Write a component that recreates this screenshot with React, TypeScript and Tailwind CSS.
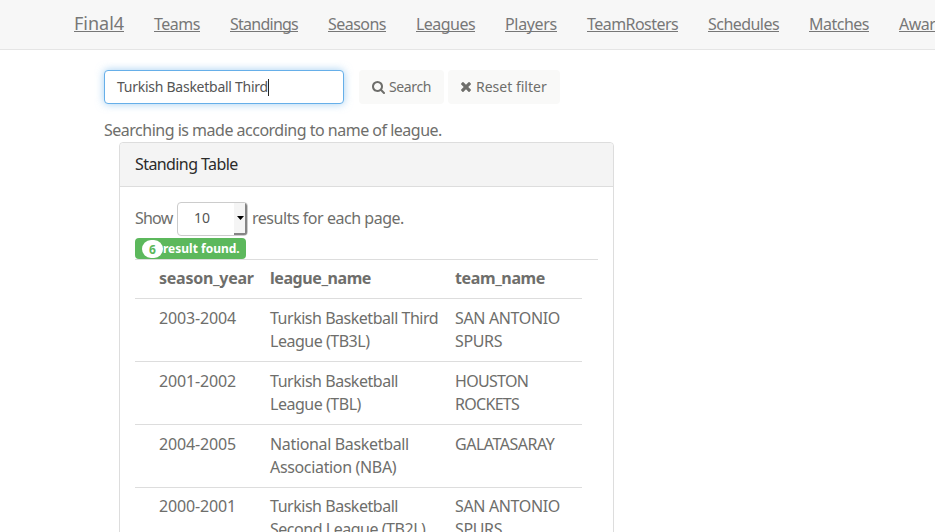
import React from "react";

const links = [
  { label: "Teams", style: "w-[46px] tracking-[-0.48px]" },
  { label: "Standings", style: "w-[68px] tracking-[-0.75px]" },
  { label: "Seasons", style: "w-[58px] tracking-[-0.53px]" },
  { label: "Leagues", style: "w-[59px] tracking-[-0.54px]" },
  { label: "Players", style: "w-[52px] tracking-[-0.33px]" },
  { label: "TeamRosters", style: "w-[91px] tracking-[-0.55px]" },
  { label: "Schedules", style: "w-[71px] tracking-[-0.54px]" },
  { label: "Matches", style: "w-[60px] tracking-[-0.5px]" },
  { label: "Awards", style: "w-[53px] tracking-[-0.5px]" },
];

const rows = [
  { season: "2003-2004", league: ["Turkish Basketball Third", "League (TB3L)"], team: ["SAN ANTONIO", "SPURS"], leagueStyle: "tracking-[-0.48px]", teamStyle: "tracking-[-0.36px]" },
  { season: "2001-2002", league: ["Turkish Basketball", "League (TBL)"], team: ["HOUSTON", "ROCKETS"], leagueStyle: "tracking-[-0.47px]", teamStyle: "tracking-[-0.7px]" },
  { season: "2004-2005", league: ["National Basketball", "Association (NBA)"], team: ["GALATASARAY"], leagueStyle: "tracking-[-0.34px]", teamStyle: "tracking-[-0.48px]" },
  { season: "2000-2001", league: ["Turkish Basketball", "Second League (TB2L)"], team: ["SAN ANTONIO", "SPURS"], leagueStyle: "tracking-[-0.47px]", teamStyle: "tracking-[-0.36px]" },
];

function Navbar() {
  return (
    <nav className="flex h-[50px] items-start gap-[30px] overflow-hidden border-b border-[#e5e5e5] bg-[#f7f7f7] pl-[74px] text-[#777]">
      <a className="mt-[12px] h-[20px] w-[50px] shrink-0 border-b border-[#777] text-[18px] leading-[23px]">Final4</a>
      {links.map((l) => (
        <a key={l.label} className={`mt-[12px] h-[20px] shrink-0 whitespace-nowrap border-b border-[#777] leading-[24px] ${l.style}`}>
          {l.label}
        </a>
      ))}
    </nav>
  );
}

function SearchForm() {
  return (
    <form className="mt-[20px] flex h-[34px] text-[14px]">
      <div className="flex w-[240px] items-center rounded border border-[#66afe9] bg-white pb-[2px] pl-[12px] tracking-[-0.26px] text-[#555] shadow-[0_0_8px_rgba(102,175,233,0.6)]">
        Turkish Basketball Third
        <span className="mt-[2px] h-[17px] w-px bg-[#222]" />
      </div>
      <button type="button" className="ml-[15px] flex w-[85px] items-center gap-[4px] rounded bg-[#f9f9f8] pl-[13px] tracking-[-0.38px] text-[#6e6e6b]">
        <svg viewBox="0 0 1664 1664" className="size-[13px]" fill="currentColor">
          <path d="M1152 704q0-185-131.500-316.500t-316.500-131.500-316.500 131.500-131.500 316.500 131.500 316.500 316.500 131.500 316.500-131.500 131.500-316.500zm512 832q0 52-38 90t-90 38q-54 0-90-38l-343-342q-179 124-399 124-143 0-273.500-55.500t-225-150-150-225-55.500-273.500 55.500-273.500 150-225 225-150 273.500-55.500 273.500 55.500 225 150 150 225 55.500 273.500q0 220-124 399l343 343q37 37 37 90z" />
        </svg>
        <span className="mb-[2px]">Search</span>
      </button>
      <button type="button" className="ml-[4px] flex w-[112px] items-center gap-[5px] rounded bg-[#f9f9f8] pl-[13px] text-[#6e6e6b]">
        <svg viewBox="0 0 1188 1188" className="size-[10px]" fill="currentColor">
          <path d="M1188 956q0 40-28 68l-136 136q-28 28-68 28t-68-28l-294-294-294 294q-28 28-68 28t-68-28l-136-136q-28-28-28-68t28-68l294-294-294-294q-28-28-28-68t28-68l136-136q28-28 68-28t68 28l294 294 294-294q28-28 68-28t68 28l136 136q28 28 28 68t-28 68l-294 294 294 294q28 28 28 68z" />
        </svg>
        <span className="mb-[2px]">Reset filter</span>
      </button>
    </form>
  );
}

function PageSize() {
  return (
    <div className="flex h-[34px] items-center whitespace-nowrap">
      <span className="mb-[2px] w-[42px] tracking-[-0.8px]">Show</span>
      <div className="flex h-[34px] w-[71px] items-stretch overflow-hidden rounded border border-[#ccc] bg-white text-[14px] text-[#555]">
        <span className="flex flex-1 items-center pb-[3px] pl-[16px]">10</span>
        <span className="flex w-[13px] items-center justify-center border-r-2 border-b-2 border-[#858585] bg-[#f5f5f5] pl-[1px]">
          <svg viewBox="0 0 7 4" className="h-[4px] w-[7px]" fill="#000">
            <path d="M0 0h7L3.500 4z" />
          </svg>
        </span>
      </div>
      <span className="mb-[2px] ml-[4px] tracking-[-0.47px]">results for each page.</span>
    </div>
  );
}

export default function App() {
  return (
    <div className="h-[532px] w-[935px] overflow-hidden bg-white font-['Noto_Sans','Open_Sans',sans-serif] text-[16px] leading-[23px] text-[#6e6e6b]">
      <Navbar />
      <main className="ml-[104px] w-[510px]">
        <SearchForm />
        <p className="mt-[15px] whitespace-nowrap tracking-[-0.5px]">Searching is made according to name of league.</p>
        <section className="ml-[15px] h-[420px] w-[495px] rounded border border-[#ddd]">
          <header className="flex h-[44px] items-center rounded-t border-b border-[#ddd] bg-[#f4f4f4] pl-[15px] tracking-[-0.59px] text-[#2b2b2b]">
            Standing Table
          </header>
          <div className="px-[15px] pt-[15px]">
            <PageSize />
            <div className="mt-[2px] flex h-[21px] w-[111px] items-center whitespace-nowrap rounded bg-[#5cb85c] pl-[7px] text-[12px] font-bold text-white">
              <span className="flex h-[18px] w-[21px] items-center justify-center rounded-full bg-white pt-[2px] text-[#5cb85c]">6</span>
              result found.
            </div>
            <div className="border-t border-[#ddd]" />
            <div className="w-[447px]">
              <div className="flex h-[39px] items-center border-b border-[#ddd] pb-[2px] pl-[24px] font-bold">
                <span className="w-[111px] tracking-[-0.26px]">season_year</span>
                <span className="w-[185px] tracking-[-0.43px]">league_name</span>
                <span className="tracking-[-0.38px]">team_name</span>
              </div>
              {rows.map((r) => (
                <div key={r.season} className="flex h-[63px] whitespace-nowrap border-b border-[#ddd] pl-[24px] pt-[8px] last:pt-[7px]">
                  <span className="w-[111px] tracking-[-0.16px]">{r.season}</span>
                  <div className={`flex w-[185px] flex-col ${r.leagueStyle}`}>
                    {r.league.map((t) => (
                      <span key={t}>{t}</span>
                    ))}
                  </div>
                  <div className={`flex flex-col ${r.teamStyle}`}>
                    {r.team.map((t) => (
                      <span key={t}>{t}</span>
                    ))}
                  </div>
                </div>
              ))}
            </div>
          </div>
        </section>
      </main>
    </div>
  );
}
